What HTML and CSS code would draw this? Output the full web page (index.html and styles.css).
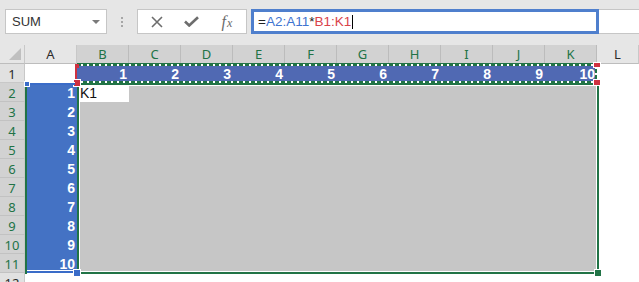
FILE: index.html
```html
<!DOCTYPE html>
<html>
<head>
<meta charset="utf-8">
<link rel="stylesheet" href="styles.css">
</head>
<body>
<div class="toolbar">
  <div class="namebox"><span class="nb-text">SUM</span><span class="nb-arrow"></span></div>
  <div class="grip"><i></i><i></i><i></i></div>
  <div class="fxbtns">
    <span class="btn b1"><svg width="12" height="12" viewBox="0 0 12 12"><path d="M1 1 L11 11 M11 1 L1 11" stroke="#6d6d6d" stroke-width="1.6" fill="none"/></svg></span>
    <span class="btn b2"><svg width="15" height="11" viewBox="0 0 15 11"><path d="M1 5.5 L5.2 9.5 L14 1.2" stroke="#6d6d6d" stroke-width="2.6" fill="none"/></svg></span>
    <span class="btn b3"><span class="fx-f">f</span><span class="fx-x">x</span></span>
  </div>
  <div class="formula"><span class="f-op">=</span><span class="f-blue">A2:A11</span><span class="f-op">*</span><span class="f-red">B1:K1</span><span class="caret"></span></div>
  <div class="rest"></div>
</div>

<div class="sheet">
  <div class="corner"><span class="tri"></span></div>
  <div class="ch">A</div>
  <div class="ch-group">
    <div class="ch sel">B</div><div class="ch sel">C</div><div class="ch sel">D</div><div class="ch sel">E</div><div class="ch sel">F</div>
    <div class="ch sel">G</div><div class="ch sel">H</div><div class="ch sel">I</div><div class="ch sel">J</div><div class="ch sel">K</div>
  </div>
  <div class="ch">L</div>

  <div class="rh">1</div>
  <div class="cell"></div>
  <div class="row1">
    <div class="num">1</div><div class="num">2</div><div class="num">3</div><div class="num">4</div><div class="num">5</div>
    <div class="num">6</div><div class="num">7</div><div class="num">8</div><div class="num">9</div><div class="num">10</div>
  </div>
  <div class="cell"></div>

  <div class="rh-group">
    <div class="rh sel">2</div><div class="rh sel">3</div><div class="rh sel">4</div><div class="rh sel">5</div><div class="rh sel">6</div>
    <div class="rh sel">7</div><div class="rh sel">8</div><div class="rh sel">9</div><div class="rh sel">10</div><div class="rh sel">11</div>
  </div>
  <div class="colA">
    <div class="num">1</div><div class="num">2</div><div class="num">3</div><div class="num">4</div><div class="num">5</div>
    <div class="num">6</div><div class="num">7</div><div class="num">8</div><div class="num">9</div><div class="num">10</div>
  </div>
  <div class="array"><div class="active">K1</div></div>
  <div class="cell"></div>

  <div class="rh">12</div>
  <div class="cell wide"></div>

  <div class="rowsel-line"></div>
  <div class="selection"></div>
  <div class="marquee"></div>
  <div class="red-line"></div>
  <div class="h red h-r1"></div>
  <div class="h red h-r2"></div>
  <div class="h red h-r3"></div>
  <div class="h red h-r4"></div>
  <div class="blue-top"></div>
  <div class="blue-bot"></div>
  <div class="h blue h-b1"></div>
  <div class="h blue h-b2"></div>
  <div class="h green h-g"></div>
</div>
</body>
</html>
```

FILE: styles.css
```css
html, body {
  margin: 0;
  padding: 0;
  background: #ffffff;
  width: 639px;
  height: 282px;
  overflow: hidden;
}

.toolbar {
  display: flex;
  align-items: flex-start;
  height: 45px;
  box-sizing: border-box;
  padding-top: 9px;
  background: #e6e6e6;
}

.namebox {
  margin-left: 5px;
  width: 102px;
  height: 25px;
  box-sizing: border-box;
  border: 1px solid #c6c6c6;
  background: #fff;
  display: flex;
  align-items: center;
  justify-content: space-between;
  padding: 0 6px 0 6px;
  font-family: "Liberation Sans", Arial, sans-serif;
  font-size: 13px;
  color: #333;
}

.nb-arrow {
  width: 0;
  height: 0;
  border-left: 4px solid transparent;
  border-right: 4px solid transparent;
  border-top: 4px solid #7a7a7a;
  margin-top: 1px;
}

.grip {
  width: 30px;
  height: 25px;
  display: flex;
  flex-direction: column;
  align-items: center;
  justify-content: center;
  gap: 2px;
}

.grip i {
  display: block;
  width: 2px;
  height: 2px;
  background: #a6a6a6;
}

.fxbtns {
  width: 110px;
  height: 25px;
  box-sizing: border-box;
  border: 1px solid #c6c6c6;
  background: #fff;
  display: flex;
  align-items: center;
}

.btn {
  display: flex;
  align-items: center;
  justify-content: center;
  height: 23px;
}

.b1 { width: 39px; }
.b2 { width: 30px; }
.b3 { width: 39px; padding-left: 2px; }

.fx-f {
  font-family: "Liberation Serif", "Times New Roman", serif;
  font-style: italic;
  font-size: 16px;
  color: #6a6a6a;
}

.fx-x {
  font-family: "Liberation Serif", "Times New Roman", serif;
  font-style: italic;
  font-size: 12px;
  color: #6a6a6a;
  margin-left: 1px;
  margin-top: 3px;
}

.formula {
  margin-left: 4px;
  width: 348px;
  height: 25px;
  box-sizing: border-box;
  border: 3px solid #4f7fcd;
  background: #fff;
  display: flex;
  align-items: center;
  padding-left: 4px;
  font-family: "Liberation Sans", Arial, sans-serif;
  font-size: 13.5px;
}

.f-op { color: #222; }
.f-blue { color: #3f74d0; }
.f-red { color: #d9424a; }

.caret {
  display: block;
  width: 1px;
  height: 14px;
  background: #000;
  margin-left: 1px;
}

.rest {
  flex: 1;
  height: 25px;
  box-sizing: border-box;
  border-top: 1px solid #c6c6c6;
  border-bottom: 1px solid #c6c6c6;
  background: #fff;
}

/* Sheet */
.sheet {
  position: relative;
  display: grid;
  grid-template-columns: 25px 52px 520px 42px;
  grid-template-rows: 19px 19px 190px 19px;
  font-family: "Liberation Sans", Arial, sans-serif;
}

.corner {
  position: relative;
  background: #e6e6e6;
  border-right: 1px solid #c8c8c8;
  border-bottom: 1px solid #bdbdbd;
  box-sizing: border-box;
}

.tri {
  position: absolute;
  right: 3px;
  bottom: 3px;
  width: 0;
  height: 0;
  border-left: 12px solid transparent;
  border-bottom: 12px solid #bfbfbf;
}

.ch {
  background: #e6e6e6;
  border-right: 1px solid #c8c8c8;
  border-bottom: 1px solid #bdbdbd;
  box-sizing: border-box;
  text-align: center;
  font-family: "Noto Sans", "Open Sans", sans-serif;
  font-size: 13px;
  line-height: 18px;
  color: #2b2b2b;
}

.ch.sel {
  background: #d2d2d2;
  color: #217346;
  border-right: 1px solid #bcbcbc;
  border-bottom: 1px solid #217346;
}

.ch-group {
  display: grid;
  grid-template-columns: repeat(10, 52px);
}

.rh {
  background: #e1e1e1;
  border-right: 1px solid #c8c8c8;
  border-bottom: 1px solid #c8c8c8;
  box-sizing: border-box;
  text-align: center;
  font-family: "Noto Sans", "Open Sans", sans-serif;
  font-size: 13px;
  line-height: 20px;
  color: #2b2b2b;
  height: 19px;
}

.rh.sel {
  background: #d2d2d2;
  color: #217346;
  border-bottom: 1px solid #c2c2c2;
}

.rh-group {
  display: grid;
  grid-template-rows: repeat(10, 19px);
}

.cell {
  background: #fff;
}

.cell.wide {
  grid-column: span 3;
}

.row1 {
  display: grid;
  grid-template-columns: repeat(10, 52px);
  background: #5069b3;
}

.colA {
  display: grid;
  grid-template-rows: repeat(10, 19px);
  background: #4472c4;
}

.num {
  text-align: right;
  padding-right: 2px;
  color: #fff;
  font-size: 14px;
  font-weight: bold;
  line-height: 20px;
  height: 19px;
}

.array {
  background: #c6c6c6;
  padding: 2px 0 0 2px;
  box-sizing: border-box;
}

.active {
  width: 50px;
  height: 17px;
  background: #fff;
  font-size: 14px;
  line-height: 17px;
  padding-left: 1px;
  box-sizing: border-box;
  color: #111;
}

/* Overlays */
.rowsel-line {
  position: absolute;
  left: 25px;
  top: 38px;
  width: 2px;
  height: 191px;
  background: #217346;
}

.selection {
  position: absolute;
  left: 77px;
  top: 38px;
  width: 522px;
  height: 191px;
  box-sizing: border-box;
  border: 2px solid #217346;
  box-shadow: inset 0 0 0 1px #fff;
}

.marquee {
  position: absolute;
  left: 77px;
  top: 18px;
  width: 520px;
  height: 21px;
  background:
    linear-gradient(#217346, #217346) 0 0 / 100% 1px no-repeat,
    repeating-linear-gradient(90deg, #217346 0 4px, #fff 4px 6px) 0 1px / 100% 2px no-repeat,
    repeating-linear-gradient(90deg, #217346 0 4px, #fff 4px 6px) 0 18px / 100% 2px no-repeat,
    linear-gradient(#217346, #217346) 0 20px / 100% 1px no-repeat,
    repeating-linear-gradient(180deg, #217346 0 4px, #fff 4px 6px) 518px 0 / 2px 100% no-repeat;
}

.red-line {
  position: absolute;
  left: 75px;
  top: 19px;
  width: 2px;
  height: 18px;
  background: #cf3140;
}

.h {
  position: absolute;
  box-sizing: border-box;
}

.red { background: #cf3140; }
.blue { background: #3a6cc8; }
.green { background: #217346; }

.h-r1 { left: 75px; top: 19px; width: 4px; height: 4px; }
.h-r2 { left: 74px; top: 35px; width: 6px; height: 6px; box-shadow: 0 0 0 1px #fff; }
.h-r3 { left: 594px; top: 18px; width: 6px; height: 4px; box-shadow: 0 0 0 1px #fff; }
.h-r4 { left: 594px; top: 35px; width: 6px; height: 5px; box-shadow: 0 0 0 1px #fff; }

.blue-top {
  position: absolute;
  left: 27px;
  top: 38px;
  width: 48px;
  height: 2px;
  background: #3a6cc8;
  box-shadow: 0 -1px 0 #fff;
}

.blue-bot {
  position: absolute;
  left: 27px;
  top: 226px;
  width: 48px;
  height: 2px;
  background: #3a6cc8;
  box-shadow: 0 -1px 0 #fff;
}

.h-b1 { left: 25px; top: 37px; width: 4px; height: 4px; box-shadow: 0 0 0 1px #fff; }
.h-b2 { left: 74px; top: 225px; width: 6px; height: 6px; box-shadow: 0 0 0 1px #fff; }
.h-g { left: 595px; top: 225px; width: 6px; height: 6px; box-shadow: 0 0 0 1px #fff; }
```
